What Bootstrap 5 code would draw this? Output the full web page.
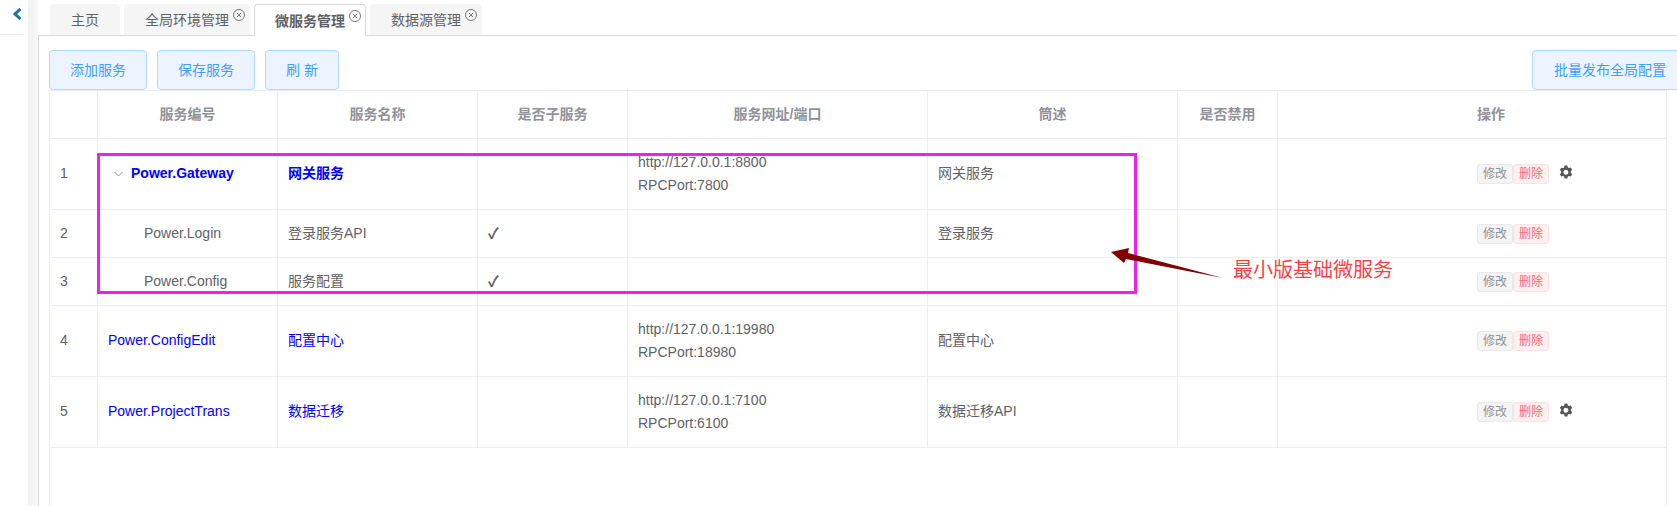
<!DOCTYPE html>
<html lang="zh-CN">

<head>
    <meta charset="UTF-8" />
    <meta name="viewport" content="width=device-width, initial-scale=1.0" />
    <title>微服务管理</title>
    <link href="https://cdn.jsdelivr.net/npm/bootstrap@5.3.3/dist/css/bootstrap.min.css" rel="stylesheet" />
    <style>
        html, body {
            height: 506px;
            overflow: hidden;
        }

        body {
            position: relative;
            background-color: #fff;
            color: #606266;
            font-family: "Liberation Sans", "Noto Sans CJK SC", sans-serif;
            font-size: 14px;
        }

        .shell {
            height: 506px;
        }

        .side-pane {
            width: 28px;
            flex: none;
        }

        .side-head {
            width: 24px;
            height: 35px;
            padding: 8px 0 0 12px;
            border-bottom: 1px solid #eeeeee;
        }

        .side-gap {
            width: 10px;
            flex: none;
            background: linear-gradient(to right, #f1f1f1, #f8f8f8);
        }

        .main-pane {
            min-width: 0;
        }

        .tab-strip {
            margin-top: 4px;
            padding-left: 12px;
            gap: 4px;
            border-bottom: 1px solid #d9d9d9;
        }

        .tab-item {
            height: 31px;
            padding: 0 5px 0 21px;
            background-color: #f5f5f5;
            border-radius: 4px 4px 0 0;
            line-height: 33px;
            color: #606266;
        }

        .tab-home {
            padding-right: 21px;
        }

        .tab-on {
            height: 32px;
            margin-bottom: -1px;
            background-color: #fff;
            border: 1px solid #d9d9d9;
            border-bottom-color: #fff;
            padding: 0 4px 0 20px;
            font-weight: 700;
            line-height: 32px;
        }

        .tab-close {
            margin: 5px 0 0 4px;
            display: block;
        }

        .pane-box {
            min-height: 0;
            border-left: 1px solid #d9d9d9;
            padding: 14px 0 0 10px;
        }

        .tool-row {
            gap: 10px;
        }

        .tool-btn {
            height: 40px;
            padding: 0 20px;
            flex: none;
            background-color: #ecf5ff;
            border: 1px solid #b3d8ff;
            border-radius: 4px;
            color: #409eff;
            font-size: 14px;
        }

        .tool-btn:hover {
            background-color: #ecf5ff;
            border-color: #b3d8ff;
            color: #409eff;
        }

        .tool-last {
            margin-right: -11px;
            padding: 0 21px;
        }

        .grid-wrap {
            width: 1618px;
            border-left: 1px solid #ebeef5;
            border-right: 1px solid #ebeef5;
        }

        .svc-table {
            width: 1617px;
            margin: 0 0 0 -1px;
            table-layout: fixed;
            --bs-table-border-color: #ebeef5;
            --bs-table-color: #606266;
            font-size: 14px;
            line-height: 23px;
        }

        .svc-table > :not(caption) > * > * {
            padding: 0 10px;
            vertical-align: middle;
        }

        .svc-table th {
            height: 48px;
            color: #909399;
            font-weight: 700;
            text-align: center;
        }

        .svc-table th.op-head {
            padding-left: 199px;
            text-align: left;
        }

        .row-tall td {
            height: 71px;
        }

        .row-short td {
            height: 48px;
        }

        .svc-table .row-tall td {
            padding-bottom: 2px;
        }

        .svc-table .row-tall td.addr-cell {
            padding-bottom: 0;
        }

        .svc-link {
            color: #0000ff;
        }

        .svc-strong {
            color: #0000ff;
            font-weight: 700;
        }

        .svc-table td.svc-child {
            padding-left: 46px;
        }

        .tick-mark {
            color: #606266;
            font-size: 15px;
            font-weight: 700;
        }

        .tree-arrow {
            margin: 0 8px 0 6px;
        }

        .svc-table td.op-cell {
            padding-left: 199px;
        }

        .mini-btn {
            display: inline-block;
            width: 36px;
            height: 20px;
            border: 1px solid;
            border-radius: 3px;
            font-size: 12px;
            line-height: 18px;
            text-align: center;
            vertical-align: middle;
        }

        .mini-edit {
            background-color: #f4f4f5;
            border-color: #e9e9eb;
            color: #909399;
        }

        .mini-del {
            background-color: #fef0f0;
            border-color: #fde2e2;
            color: #f56c6c;
        }

        .gear-icon {
            margin: -4px 0 0 6px;
            vertical-align: middle;
        }

        .note-box {
            position: absolute;
            left: 97px;
            top: 153px;
            width: 1040px;
            height: 141px;
            border: 3px solid #f01ff0;
        }

        .note-arrow {
            position: absolute;
            left: 1105px;
            top: 244px;
        }

        .note-text {
            position: absolute;
            left: 1233px;
            top: 257px;
            color: #f44343;
            font-size: 20px;
            line-height: 26px;
        }
    </style>
</head>

<body>
    <div class="shell d-flex">
        <div class="side-pane">
            <div class="side-head">
                <svg width="10" height="12" viewBox="0 0 10 12" class="d-block">
                    <path d="M8.5 1 3 6l5.5 5" fill="none" stroke="#1f6fb5" stroke-width="3" />
                </svg>
            </div>
        </div>
        <div class="side-gap"></div>
        <div class="main-pane flex-grow-1 d-flex flex-column">
            <div class="tab-strip d-flex">
                <div class="tab-item tab-home">主页</div>
                <div class="tab-item d-flex">全局环境管理
                    <svg class="tab-close" width="12" height="12" viewBox="0 0 12 12"><circle cx="6" cy="6" r="5.5" fill="none" stroke="#777" /><path d="M3.8 3.8l4.4 4.4M8.2 3.8l-4.4 4.4" stroke="#777" /></svg>
                </div>
                <div class="tab-item tab-on d-flex">微服务管理
                    <svg class="tab-close" width="12" height="12" viewBox="0 0 12 12"><circle cx="6" cy="6" r="5.5" fill="none" stroke="#777" /><path d="M3.8 3.8l4.4 4.4M8.2 3.8l-4.4 4.4" stroke="#777" /></svg>
                </div>
                <div class="tab-item d-flex">数据源管理
                    <svg class="tab-close" width="12" height="12" viewBox="0 0 12 12"><circle cx="6" cy="6" r="5.5" fill="none" stroke="#777" /><path d="M3.8 3.8l4.4 4.4M8.2 3.8l-4.4 4.4" stroke="#777" /></svg>
                </div>
            </div>
            <div class="pane-box flex-grow-1 d-flex flex-column">
                <div class="d-flex tool-row">
                    <button type="button" class="btn tool-btn">添加服务</button>
                    <button type="button" class="btn tool-btn">保存服务</button>
                    <button type="button" class="btn tool-btn">刷 新</button>
                    <button type="button" class="btn tool-btn tool-last ms-auto">批量发布全局配置</button>
                </div>
                <div class="grid-wrap flex-grow-1">
                    <table class="table table-bordered svc-table">
                        <colgroup>
                            <col style="width: 48px" />
                            <col style="width: 180px" />
                            <col style="width: 200px" />
                            <col style="width: 150px" />
                            <col style="width: 300px" />
                            <col style="width: 250px" />
                            <col style="width: 100px" />
                            <col style="width: 389px" />
                        </colgroup>
                        <thead>
                            <tr>
                                <th></th>
                                <th>服务编号</th>
                                <th>服务名称</th>
                                <th>是否子服务</th>
                                <th>服务网址/端口</th>
                                <th>筒述</th>
                                <th>是否禁用</th>
                                <th class="op-head">操作</th>
                            </tr>
                        </thead>
                        <tbody>
                            <tr class="row-tall">
                                <td>1</td>
                                <td class="svc-strong">
                                    <svg class="tree-arrow" width="9" height="6" viewBox="0 0 9 6"><path d="M.5 1l4 4 4-4" fill="none" stroke="#909399" /></svg>Power.Gateway
                                </td>
                                <td class="svc-strong">网关服务</td>
                                <td></td>
                                <td class="addr-cell">http://127.0.0.1:8800<br />RPCPort:7800</td>
                                <td>网关服务</td>
                                <td></td>
                                <td class="op-cell">
                                    <span class="mini-btn mini-edit">修改</span><span class="mini-btn mini-del">删除</span>
                                    <svg class="gear-icon" width="14" height="14" viewBox="0 0 14 14"><path fill="#555" fill-rule="evenodd" d="M5.6.6h2.8l.4 1.8 1.3.7 1.7-.6 1.4 2.4-1.3 1.2v1.8l1.3 1.2-1.4 2.4-1.7-.6-1.3.7-.4 1.8H5.6l-.4-1.8-1.3-.7-1.7.6L.8 9.3l1.3-1.2V6.3L.8 5.1l1.4-2.4 1.7.6 1.3-.7zM7 4.7a2.5 2.5 0 1 0 0 5 2.5 2.5 0 0 0 0-5z" /></svg>
                                </td>
                            </tr>
                            <tr class="row-short">
                                <td>2</td>
                                <td class="svc-child">Power.Login</td>
                                <td>登录服务API</td>
                                <td><span class="tick-mark">✓</span></td>
                                <td></td>
                                <td>登录服务</td>
                                <td></td>
                                <td class="op-cell"><span class="mini-btn mini-edit">修改</span><span class="mini-btn mini-del">删除</span></td>
                            </tr>
                            <tr class="row-short">
                                <td>3</td>
                                <td class="svc-child">Power.Config</td>
                                <td>服务配置</td>
                                <td><span class="tick-mark">✓</span></td>
                                <td></td>
                                <td></td>
                                <td></td>
                                <td class="op-cell"><span class="mini-btn mini-edit">修改</span><span class="mini-btn mini-del">删除</span></td>
                            </tr>
                            <tr class="row-tall">
                                <td>4</td>
                                <td class="svc-link">Power.ConfigEdit</td>
                                <td class="svc-link">配置中心</td>
                                <td></td>
                                <td class="addr-cell">http://127.0.0.1:19980<br />RPCPort:18980</td>
                                <td>配置中心</td>
                                <td></td>
                                <td class="op-cell"><span class="mini-btn mini-edit">修改</span><span class="mini-btn mini-del">删除</span></td>
                            </tr>
                            <tr class="row-tall">
                                <td>5</td>
                                <td class="svc-link">Power.ProjectTrans</td>
                                <td class="svc-link">数据迁移</td>
                                <td></td>
                                <td class="addr-cell">http://127.0.0.1:7100<br />RPCPort:6100</td>
                                <td>数据迁移API</td>
                                <td></td>
                                <td class="op-cell">
                                    <span class="mini-btn mini-edit">修改</span><span class="mini-btn mini-del">删除</span>
                                    <svg class="gear-icon" width="14" height="14" viewBox="0 0 14 14"><path fill="#555" fill-rule="evenodd" d="M5.6.6h2.8l.4 1.8 1.3.7 1.7-.6 1.4 2.4-1.3 1.2v1.8l1.3 1.2-1.4 2.4-1.7-.6-1.3.7-.4 1.8H5.6l-.4-1.8-1.3-.7-1.7.6L.8 9.3l1.3-1.2V6.3L.8 5.1l1.4-2.4 1.7.6 1.3-.7zM7 4.7a2.5 2.5 0 1 0 0 5 2.5 2.5 0 0 0 0-5z" /></svg>
                                </td>
                            </tr>
                        </tbody>
                    </table>
                </div>
            </div>
        </div>
    </div>

    <!-- annotation drawn over the table -->
    <div class="note-box"></div>
    <svg class="note-arrow" width="122" height="38" viewBox="0 0 122 38">
        <polygon fill="#800000" points="6,8 24,4 23,9 118,34 21,15 19,19" />
    </svg>
    <div class="note-text">最小版基础微服务</div>

    <script src="https://cdn.jsdelivr.net/npm/bootstrap@5.3.3/dist/js/bootstrap.bundle.min.js"></script>
</body>
</html>
